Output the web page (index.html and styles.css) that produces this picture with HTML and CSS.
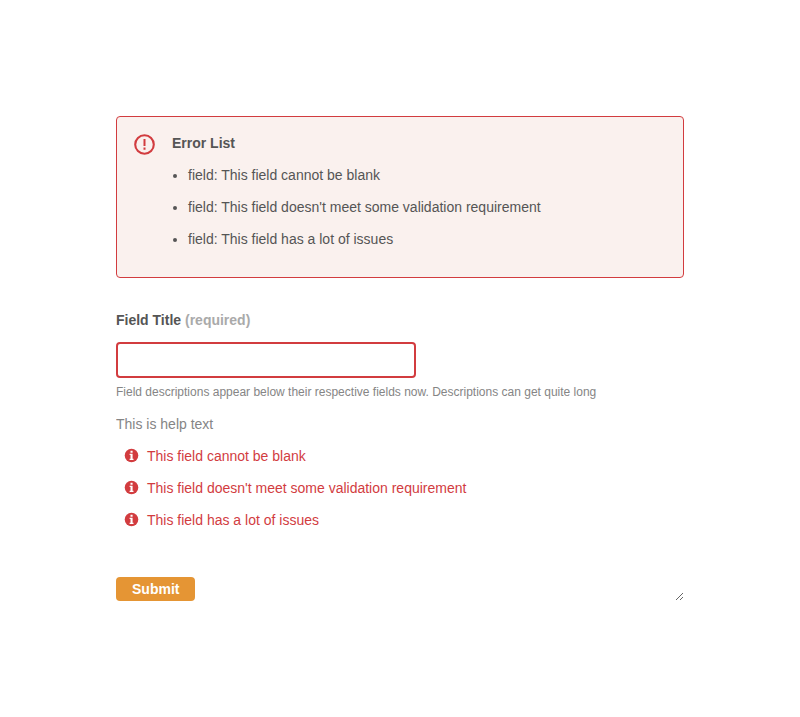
FILE: index.html
```html
<!DOCTYPE html>
<html lang="en">
<head>
<meta charset="utf-8">
<title>Field validation</title>
<link rel="stylesheet" href="styles.css">
</head>
<body>
<form class="form" novalidate>
  <section class="alert" role="alert">
    <svg class="alert-icon" viewBox="0 0 21 21" aria-hidden="true">
      <circle cx="10.5" cy="10.5" r="9.3" fill="none" stroke="currentColor" stroke-width="2.1"/>
      <path d="M9.500 5h2v7h-2zM9.500 13.500h2v2.200h-2z" fill="currentColor"/>
    </svg>
    <div>
      <h2 class="alert-title">Error List</h2>
      <ul class="alert-list">
        <li>field: This field cannot be blank</li>
        <li>field: This field doesn't meet some validation requirement</li>
        <li>field: This field has a lot of issues</li>
      </ul>
    </div>
  </section>
  <label class="label" for="field">Field Title <span class="required">(required)</span></label>
  <input class="input" id="field" type="text" aria-describedby="description help">
  <p class="description" id="description">Field descriptions appear below their respective fields now. Descriptions can get quite long</p>
  <p class="help" id="help">This is help text</p>
  <ul class="errors">
    <li><svg viewBox="0 0 15 15" aria-hidden="true"><circle cx="7.500" cy="7.500" r="6.800" fill="currentColor"/><path d="M6.500 2.700h2.100v2H6.500zM5.600 5.800h3v4.900h.9V12H5.600v-1.300h.9V7.100h-.9z" fill="#fff"/></svg>This field cannot be blank</li>
    <li><svg viewBox="0 0 15 15" aria-hidden="true"><circle cx="7.500" cy="7.500" r="6.800" fill="currentColor"/><path d="M6.500 2.700h2.100v2H6.500zM5.600 5.800h3v4.900h.9V12H5.600v-1.300h.9V7.100h-.9z" fill="#fff"/></svg>This field doesn't meet some validation requirement</li>
    <li><svg viewBox="0 0 15 15" aria-hidden="true"><circle cx="7.500" cy="7.500" r="6.800" fill="currentColor"/><path d="M6.500 2.700h2.100v2H6.500zM5.600 5.800h3v4.900h.9V12H5.600v-1.300h.9V7.100h-.9z" fill="#fff"/></svg>This field has a lot of issues</li>
  </ul>
  <button class="submit" type="submit">Submit</button>
</form>
</body>
</html>
```
FILE: styles.css
```css
* {
  box-sizing: border-box;
}

body {
  margin: 0;
  padding: 116px;
  background: #fff;
  color: #555;
  font: 14px/24px "Liberation Sans", Arial, sans-serif;
}

.form {
  overflow: hidden;
  resize: both;
}

.alert {
  display: flex;
  gap: 17px;
  padding: 14px 17px 18px;
  margin-bottom: 30px;
  border: 1px solid #d23c3f;
  border-radius: 4px;
  background: #faf1ee;
}

.alert-icon {
  flex: none;
  width: 21px;
  height: 21px;
  margin-top: 3px;
  color: #d23c3f;
}

.alert-title {
  margin: 0 0 8px;
  font-size: 14px;
}

.alert-list {
  margin: 0;
  padding-left: 16px;
}

.alert-list li {
  margin-bottom: 8px;
}

.label {
  display: block;
  margin-bottom: 10px;
  font-weight: bold;
}

.required {
  color: #aaa;
}

.input {
  display: block;
  width: 300px;
  max-width: 100%;
  height: 36px;
  padding: 0 8px;
  border: 2px solid #d23c3f;
  border-radius: 4px;
  background: #fff;
  font: inherit;
}

.description,
.help {
  margin: 0 0 8px;
  color: #858585;
}

.description {
  margin-top: 2px;
  font-size: 12px;
}

.errors {
  margin: 0;
  padding: 0 0 37px 8px;
  list-style: none;
  color: #d23c3f;
}

.errors li {
  display: flex;
  align-items: flex-start;
  gap: 8px;
  margin-bottom: 8px;
}

.errors svg {
  flex: none;
  width: 15px;
  height: 15px;
  margin-top: 4px;
}

.submit {
  display: block;
  height: 24px;
  padding: 0 16px;
  border: 0;
  border-radius: 4px;
  background: #e59534;
  color: #fff;
  font: bold 14px/24px "Liberation Sans", Arial, sans-serif;
}
```
